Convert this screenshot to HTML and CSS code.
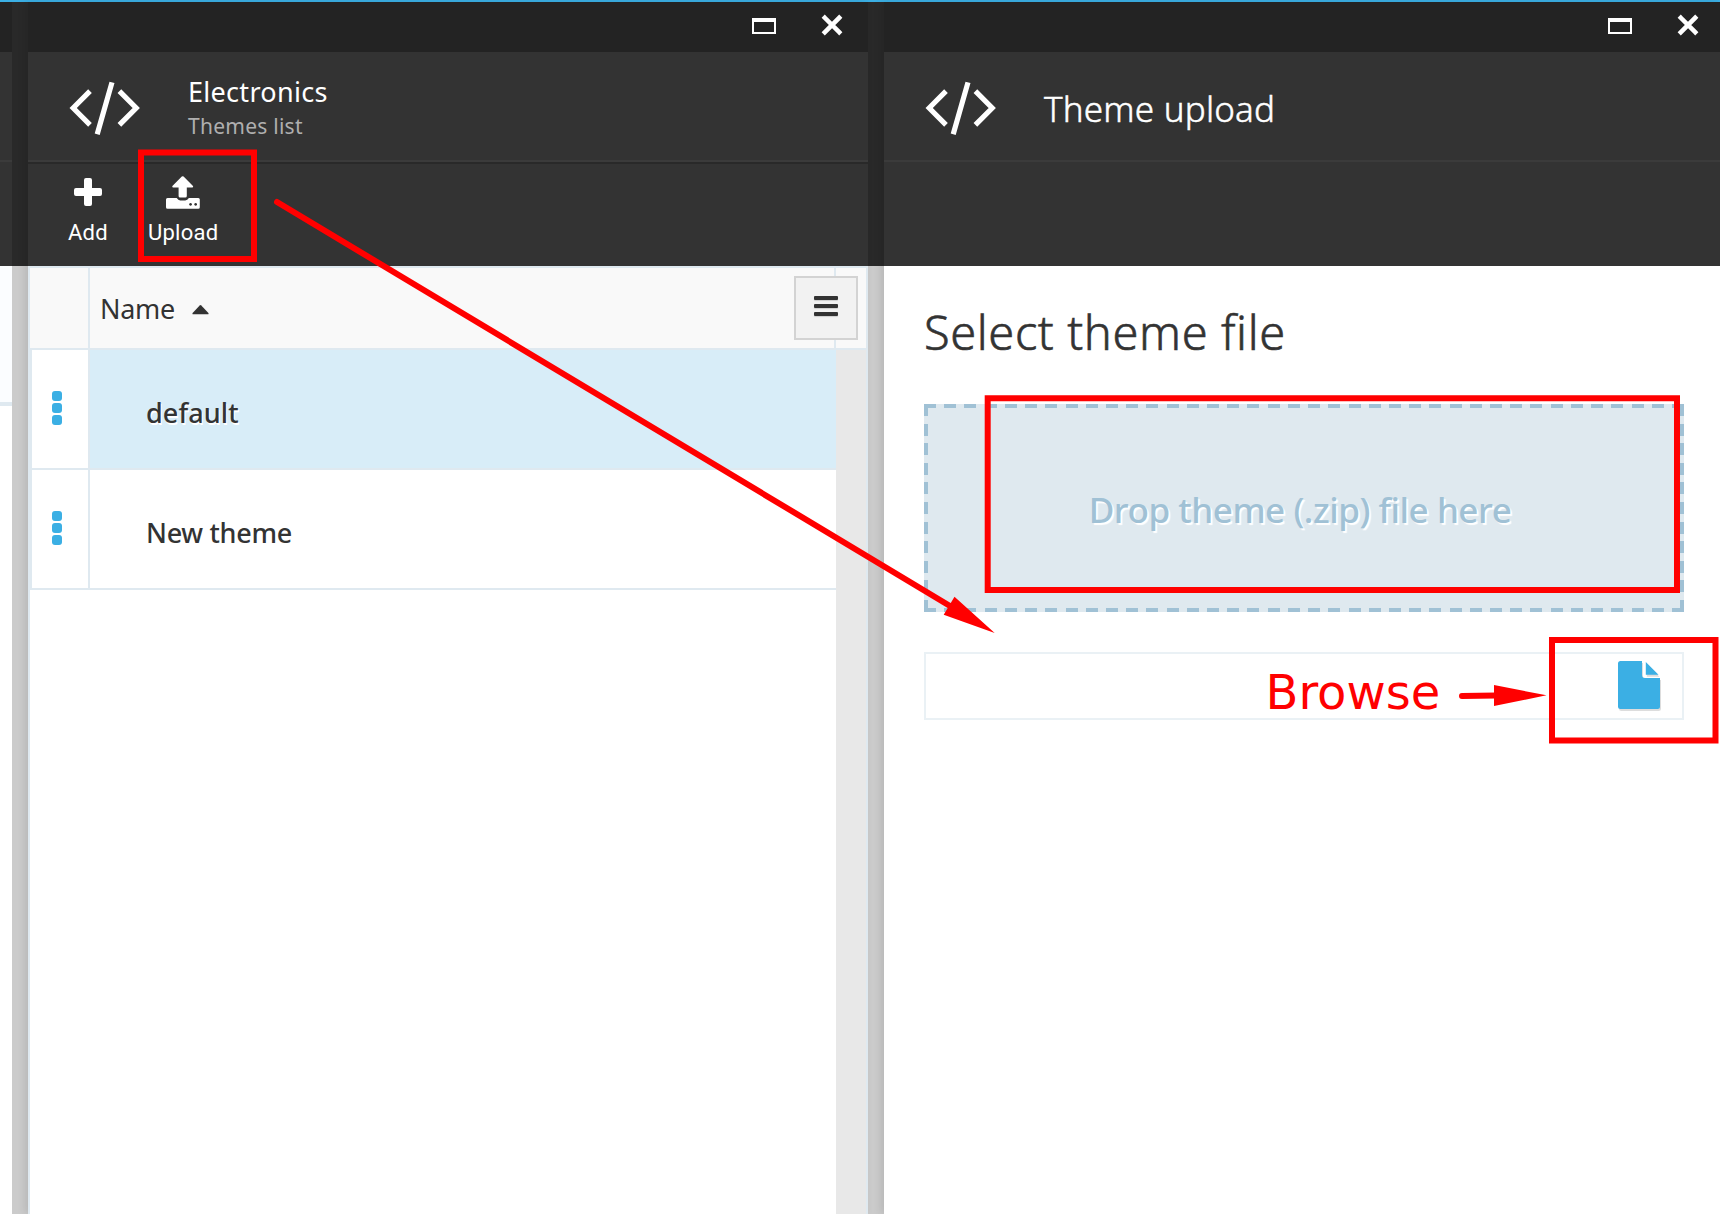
FILE: index.html
```html
<!DOCTYPE html>
<html lang="en">
<head>
<meta charset="utf-8">
<title>Themes</title>
<link rel="stylesheet" href="styles.css">
</head>
<body>
<svg class="defs" width="0" height="0" aria-hidden="true">
  <symbol id="code" viewBox="0 0 72 54">
    <path d="M21 10.200 4.200 27 21 43.800M50.400 10.200 67.200 27 50.400 43.800M43 1.400 28.200 53.200" fill="none" stroke="#fff" stroke-width="5.200" stroke-linecap="butt" stroke-linejoin="miter"/>
  </symbol>
  <symbol id="maximize" viewBox="0 0 24 16">
    <path fill="#fff" fill-rule="evenodd" d="M0 0h24v16H0zM2 4v10h20V4z"/>
  </symbol>
  <symbol id="close" viewBox="0 0 22 22">
    <path d="M3 3 19 19M19 3 3 19" stroke="#fff" stroke-width="5" stroke-linecap="square" stroke-linejoin="round" transform="translate(1.1 1.1) scale(.9)"/>
  </symbol>
</svg>
<main class="workspace">
  <section class="blade blade-previous">
    <div class="titlebar"></div>
    <header class="heading"></header>
    <div class="toolbar"></div>
    <div class="previous-top"></div>
  </section>
  <section class="blade blade-list">
    <div class="titlebar"><svg class="maximize"><use href="#maximize"/></svg><svg class="close"><use href="#close"/></svg></div>
    <header class="heading">
      <svg class="code"><use href="#code"/></svg>
      <div class="titles"><h1><span class="t-electronics">Electronics</span></h1><p><span class="t-list">Themes list</span></p></div>
    </header>
    <div class="toolbar toolbar-actions">
      <button class="action action-add">
        <svg width="28" height="28" viewBox="0 0 28 28"><path fill="#fff" d="M12 0h4q2 0 2 2v8h8q2 0 2 2v4q0 2-2 2h-8v8q0 2-2 2h-4q-2 0-2-2v-8H2q-2 0-2-2v-4q0-2 2-2h8V2q0-2 2-2z"/></svg>
        <span class="t-add">Add</span>
      </button>
      <button class="action action-upload">
        <svg width="34" height="33" viewBox="0 0 34 33"><path fill="#fff" fill-rule="evenodd" d="M15.800.6q.9-.9 1.800 0L27 10q.5 1.500-.8 1.500h-5.400V20q0 1.500-1.500 1.500h-5.200q-1.500 0-1.500-1.500v-8.500H7.200q-1.300 0-.8-1.500zM1.500 22h9.200q1.500 2.400 3.500 2.400h5q2.200 0 3.700-2.400h9.400q1.500 0 1.500 1.500v7.800q0 1.500-1.500 1.500H1.500Q0 32.800 0 31.300v-7.800Q0 22 1.500 22zM24.500 27a1.400 1.400 0 1 0 .1 0zM29.600 27a1.400 1.400 0 1 0 .1 0z"/></svg>
        <span class="t-upload">Upload</span>
      </button>
    </div>
    <div class="grid">
      <div class="grid-head">
        <div class="head-menu"></div>
        <div class="head-name"><span class="t-name">Name</span><svg width="17" height="10" viewBox="0 0 17 10"><path fill="#333" d="M7.700.5q.8-.8 1.600 0L16.400 8q.6 1.300-.7 1.300H1.300Q0 9.300.6 8z"/></svg></div>
        <div class="head-end"></div>
        <button class="columns"><i></i><i></i><i></i></button>
      </div>
      <div class="grid-body">
        <div class="rows">
          <div class="row selected"><div class="dots"><i></i><i></i><i></i></div><div class="cell"><span class="t-default">default</span></div></div>
          <div class="row"><div class="dots"><i></i><i></i><i></i></div><div class="cell"><span class="t-new">New theme</span></div></div>
        </div>
        <div class="scroll"></div>
      </div>
    </div>
  </section>
  <section class="blade blade-upload">
    <div class="titlebar"><svg class="maximize"><use href="#maximize"/></svg><svg class="close"><use href="#close"/></svg></div>
    <header class="heading">
      <svg class="code"><use href="#code"/></svg>
      <h1 class="single"><span class="t-themeupload">Theme upload</span></h1>
    </header>
    <div class="toolbar"></div>
    <div class="form">
      <h2><span class="t-select">Select theme file</span></h2>
      <div class="dropzone"><span class="t-drop">Drop theme (.zip) file here</span></div>
      <div class="file-input">
        <svg width="44" height="50" viewBox="0 0 44 50"><path fill="#3bafe4" d="M2.500 0H24v14q0 3 3 3h15v28.500q0 2.500-2.500 2.500h-37Q0 48 0 45.500v-43Q0 0 2.500 0zM27.800 1 40.500 13.800H27.800z"/></svg>
      </div>
    </div>
  </section>
</main>
<div class="notes">
  <svg width="1720" height="1214" viewBox="0 0 1720 1214">
    <g fill="none" stroke="#f00" stroke-width="6">
      <path d="M141 152.500h113v106.500H141zM987.700 398.300h689.300v191.700H987.700zM1552 640h163.500v100.500H1552z"/>
      <path d="M277 202 950 606M1462 696 1496 695.600" stroke-linecap="round"/>
    </g>
    <path fill="#f00" d="M954.500 596.700 994.700 633 943.700 614.700zM1494 685 1546.500 695.300 1494 706z"/>
  </svg>
  <span class="note-text">Browse</span>
</div>
</body>
</html>
```
FILE: styles.css
```css
* { box-sizing: border-box; }
body { margin: 0; width: 1720px; height: 1214px; overflow: hidden; font-family: "Noto Sans", "Open Sans", sans-serif; color: #333; background: #fff; }
h1, h2, p { margin: 0; font-weight: 400; }
button { padding: 0; border: 0; background: none; color: inherit; font: inherit; }
svg { display: block; flex: none; }
span { display: block; white-space: nowrap; }
.defs { position: absolute; }
.workspace { display: flex; gap: 16px; height: 1214px; border-top: 2px solid #3bafe4; background: linear-gradient(#292929 264px, #cbcbcb 264px); }
.blade { display: flex; flex-direction: column; background: #fff; box-shadow: -3px 0 8px rgba(0, 0, 0, .1); }
.blade-previous { width: 12px; box-shadow: none; }
.blade-list { width: 840px; }
.blade-upload { width: 836px; }
.previous-top { height: 140px; background: #fbfdff; border-bottom: 4px solid #dfe9f0; }

.titlebar { height: 50px; flex: none; background: #232323; display: flex; align-items: flex-start; justify-content: flex-end; gap: 45px; padding: 12px 25px 0 0; }
.blade-upload .titlebar { padding-right: 21px; }
.blade-previous .titlebar { padding: 0; }
.maximize { width: 24px; height: 16px; margin-top: 4px; }
.close { width: 22px; height: 22px; }
.heading { height: 110px; flex: none; background: #333; border-bottom: 2px solid #3b3b3b; display: flex; padding-left: 41px; color: #fff; }
.blade-previous .heading { padding: 0; }
.code { width: 72px; height: 54px; margin-top: 29px; }
.titles { padding: 20px 0 0 47px; }
.titles h1 { font-size: 27px; line-height: 40px; letter-spacing: .3px; }
.titles p { margin-top: -1px; font-size: 21px; line-height: 30px; letter-spacing: .25px; color: #afafaf; }
.single { padding: 33px 0 0 47px; font-size: 35px; line-height: 48px; font-weight: 300; letter-spacing: .2px; -webkit-text-stroke: .5px #fff; }
.toolbar { height: 104px; flex: none; background: #333; }
.toolbar-actions { border-top: 2px solid #292929; display: flex; padding-left: 40px; gap: 40px; color: #fff; }
.action { display: flex; flex-direction: column; font-family: Roboto, sans-serif; font-size: 22px; line-height: 30px; letter-spacing: .25px; }
.action svg { align-self: center; }
.action-add svg { margin: 14px 0 12px; }
.action-upload svg { margin: 12px 0 9px; }

.grid { flex: 1; display: flex; flex-direction: column; border: solid #dfe9f0; border-width: 2px 2px 0 2px; }
.grid-head { position: relative; display: flex; height: 82px; flex: none; background: #f9f9f9; border-bottom: 2px solid #dfe9f0; }
.head-menu { width: 60px; border-right: 2px solid #dfe9f0; }
.head-name { flex: 1; display: flex; padding-left: 10px; font-size: 27px; line-height: 40px; padding-top: 21px; gap: 17px; border-right: 2px solid #dfe9f0; text-shadow: 1px 1px #fff; }
.t-name { letter-spacing: -.3px; }
.head-name svg { margin-top: 16px; }
.head-end { width: 30px; }
.columns { position: absolute; top: 8px; right: 8px; width: 64px; height: 64px; border: 2px solid #d3d3d3; background: #f2f2f2; display: flex; flex-direction: column; align-items: center; gap: 4px; padding-top: 18px; }
.columns i { width: 24px; height: 4px; background: #333; border-radius: 1px; box-shadow: 0 1px 1px rgba(0, 0, 0, .15); }
.grid-body { flex: 1; display: flex; }
.rows { flex: 1; }
.row { display: flex; height: 120px; border-bottom: 2px solid #dfe9f0; border-left: 2px solid #dfe9f0; }
.dots { width: 58px; border-right: 2px solid #dfe9f0; display: flex; flex-direction: column; gap: 2px; padding: 41px 0 0 20px; }
.dots i { width: 10px; height: 10px; border-radius: 3px; background: #3bafe4; }
.cell { flex: 1; padding: 43px 0 0 56px; font-size: 27px; line-height: 40px; font-weight: 500; text-shadow: 1px 2px #fff; }
.t-default { letter-spacing: .1px; }
.t-new { letter-spacing: -.3px; }
.selected .cell { background: #d8edf8; }
.scroll { width: 30px; background: #e8e8e8; }

.form { padding: 36px 36px 0 40px; }
h2 { font-size: 47px; line-height: 60px; font-weight: 300; letter-spacing: .6px; -webkit-text-stroke: .6px #333; }
.dropzone { margin-top: 42px; height: 208px; display: flex; justify-content: center; padding: 81px 8px 0 0; font-size: 35px; line-height: 50px; font-weight: 500; letter-spacing: -.45px; color: #a0c1d5; text-shadow: 2px 2px 1px #fff;
  background-color: #dfe9ef;
  background-image:
    repeating-linear-gradient(90deg, #a0c1d5 0 12px, transparent 12px 20.216px),
    repeating-linear-gradient(90deg, #a0c1d5 0 12px, transparent 12px 20.216px),
    repeating-linear-gradient(#a0c1d5 0 12px, transparent 12px 19.6px),
    repeating-linear-gradient(#a0c1d5 0 12px, transparent 12px 19.6px);
  background-size: 100% 4px, 100% 4px, 4px 100%, 4px 100%;
  background-position: top, bottom, left, right;
  background-repeat: no-repeat; }
.file-input { margin-top: 40px; height: 68px; border: 2px solid #eaf1f5; display: flex; justify-content: flex-end; padding: 7px 20px 0 0; }
.file-input svg { filter: drop-shadow(1px 2px 0 #ddd); }

.notes { position: absolute; inset: 0; pointer-events: none; }
.note-text { position: absolute; left: 1265.5px; top: 662px; font: 48px/60px "DejaVu Sans", sans-serif; color: #f00; }
```
